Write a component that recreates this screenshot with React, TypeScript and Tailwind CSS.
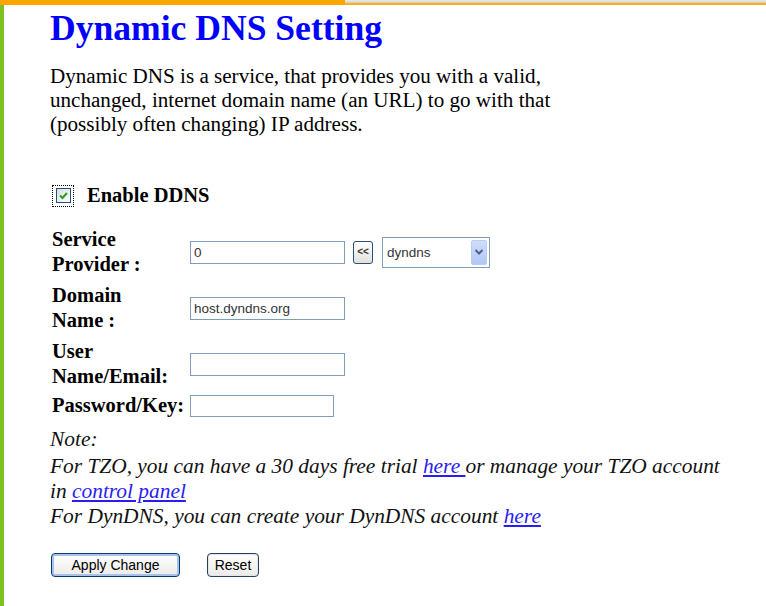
export default function App() {
  return (
    <div className="h-screen bg-white flex flex-col overflow-hidden">
      {/* top strip */}
      <div className="flex h-[5px] shrink-0">
        <div className="w-[345px] bg-[#fba600]" />
        <div className="flex-1 flex flex-col">
          <div className="h-[3px] bg-gradient-to-b from-[#ebebeb] to-[#cfcfcf]" />
          <div className="h-[2px] bg-[#fbb012]" />
        </div>
      </div>

      <div className="flex flex-1">
        {/* green side rail */}
        <div className="w-[4px] bg-[#7cc220]" />

        <div className="flex-1 pl-[46px] font-['Liberation_Serif',serif] text-black">
          <h1 className="mt-[3px] text-[35.6px] leading-[40px] font-bold text-[#0000ff]">Dynamic DNS Setting</h1>

          <p className="mt-[16px] text-[21.1px] leading-[24px] w-[540px]">
            Dynamic DNS is a service, that provides you with a valid,
            <br />
            unchanged, internet domain name (an URL) to go with that
            <br />
            (possibly often changing) IP address.
          </p>

          {/* enable checkbox */}
          <div className="mt-[47px] flex items-center h-[25px] ml-[2px]">
            <div className="w-[22px] h-[22px] border border-dotted border-black flex items-center justify-center">
              <div className="w-[15px] h-[15px] border border-[#1c5180] bg-gradient-to-br from-[#dcdcd7] to-white flex items-center justify-center">
                <svg width="11" height="11" viewBox="0 0 11 11">
                  <path d="M2 5.5 L4.5 8 L9 3" fill="none" stroke="#21a121" strokeWidth="2" />
                </svg>
              </div>
            </div>
            <span className="ml-[13px] text-[20.5px] leading-[25px] font-bold">Enable DDNS</span>
          </div>

          {/* form rows */}
          <div className="mt-[19px] flex flex-col text-[20.5px] leading-[25px] font-bold">
            <div className="flex items-center">
              <div className="w-[140px] pl-[2px]">
                Service
                <br />
                Provider :
              </div>
              <input
                defaultValue="0"
                className="w-[155px] h-[23px] border border-[#7f9db9] px-[3px] font-['Liberation_Sans',sans-serif] text-[13.5px] font-normal text-[#333] outline-none"
              />
              <button className="ml-[8px] w-[20px] h-[23px] rounded-[3px] border border-[#2c4f7c] bg-gradient-to-b from-white to-[#e2e2da] font-['Liberation_Sans',sans-serif] text-[10px] font-bold leading-none text-[#333] flex items-center justify-center">
                &lt;&lt;
              </button>
              <div className="ml-[9px] w-[108px] h-[31px] border border-[#7f9db9] bg-white flex items-center justify-between pl-[4px] pr-[2px] font-['Liberation_Sans',sans-serif] text-[13.5px] font-normal text-[#333]">
                <span>dyndns</span>
                <div className="w-[16px] h-[25px] rounded-[2px] border border-[#b9cbf3] bg-gradient-to-b from-[#d0ddfb] to-[#b2c7f5] flex items-center justify-center">
                  <svg width="10" height="8" viewBox="0 0 10 8">
                    <path d="M1.5 2 L5 5.5 L8.5 2" fill="none" stroke="#4d6185" strokeWidth="2" />
                  </svg>
                </div>
              </div>
            </div>

            <div className="mt-[6px] flex items-center">
              <div className="w-[140px] pl-[2px]">
                Domain
                <br />
                Name :
              </div>
              <input
                defaultValue="host.dyndns.org"
                className="w-[155px] h-[23px] border border-[#7f9db9] px-[3px] font-['Liberation_Sans',sans-serif] text-[13.5px] font-normal text-[#333] outline-none"
              />
            </div>

            <div className="mt-[6px] flex items-center">
              <div className="w-[140px] pl-[2px]">
                User
                <br />
                Name/Email:
              </div>
              <input className="w-[155px] h-[23px] border border-[#7f9db9] px-[3px] font-['Liberation_Sans',sans-serif] text-[13.5px] font-normal outline-none" />
            </div>

            <div className="mt-[4px] flex items-center">
              <div className="w-[140px] pl-[2px]">Password/Key:</div>
              <input
                type="password"
                className="w-[144px] h-[22px] border border-[#7f9db9] px-[3px] font-['Liberation_Sans',sans-serif] text-[13.5px] font-normal outline-none"
              />
            </div>
          </div>

          {/* note */}
          <div className="mt-[9px] text-[21.4px] leading-[25px] italic text-[#111]">
            <div className="mb-[2px]">Note:</div>
            <div>
              For TZO, you can have a 30 days free trial{' '}
              <a href="#" className="text-[#2a1cf5] underline">here </a>
              or manage your TZO account
              <br />
              in <a href="#" className="text-[#2a1cf5] underline">control panel</a>
              <br />
              For DynDNS, you can create your DynDNS account{' '}
              <a href="#" className="text-[#2a1cf5] underline">here</a>
            </div>
          </div>

          {/* buttons */}
          <div className="mt-[24px] flex items-center ml-[1px]">
            <button className="w-[129px] h-[24px] rounded-[4px] border border-[#003c74] bg-gradient-to-b from-white to-[#ecebe6] shadow-[inset_0_0_0_2px_#a8c2ec] font-['Liberation_Sans',sans-serif] text-[14px] text-black">
              Apply Change
            </button>
            <button className="ml-[27px] w-[52px] h-[24px] rounded-[4px] border border-[#2c3f5a] bg-gradient-to-b from-white to-[#ecebe6] shadow-[inset_0_0_0_1px_#dfe6f2] font-['Liberation_Sans',sans-serif] text-[14px] text-black">
              Reset
            </button>
          </div>
        </div>
      </div>
    </div>
  );
}
